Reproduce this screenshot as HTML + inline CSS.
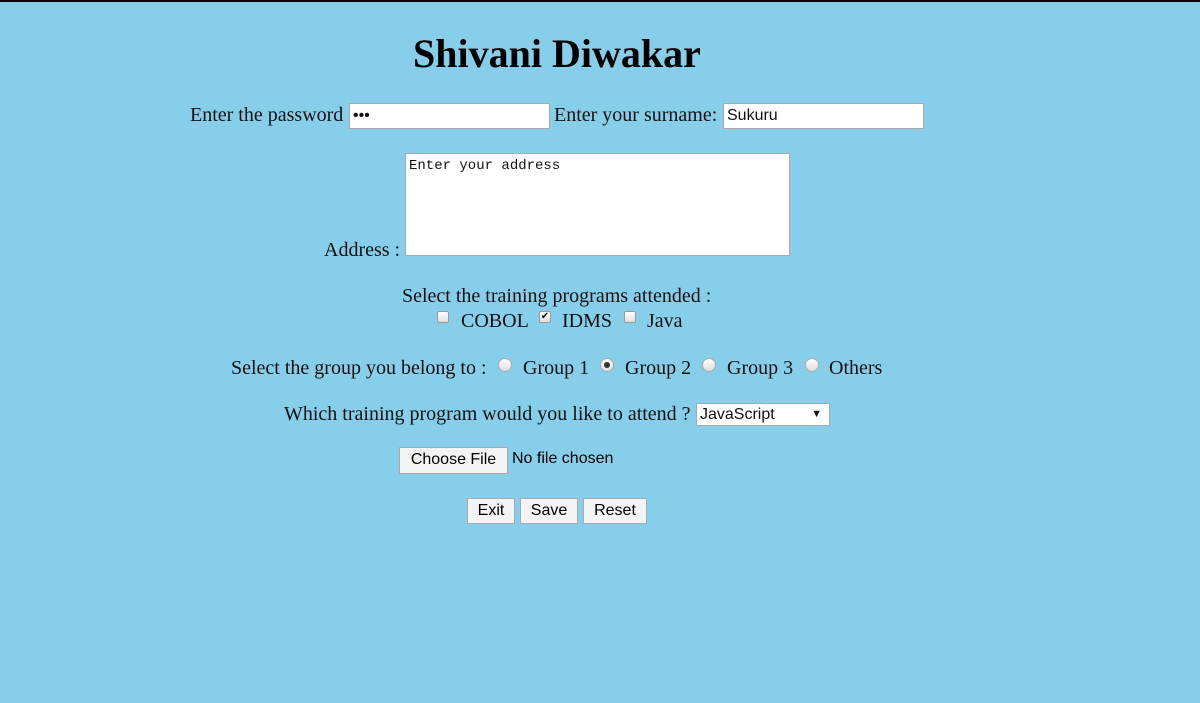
<!DOCTYPE html>
<html><head><style>
body{margin:0;width:1200px;height:703px;background:#87ceeb;position:relative;overflow:hidden;font-family:"Liberation Serif",serif;font-size:20px;color:#111}
.a{position:absolute;white-space:nowrap}
.inp{position:absolute;background:#fff;border:1px solid #a9a9a9;box-sizing:border-box;font-family:"Liberation Sans",sans-serif;font-size:16px;padding-left:3px;line-height:24px}
.btn{position:absolute;background:#f3f3f3;border:1px solid #aaa;box-sizing:border-box;font-family:"Liberation Sans",sans-serif;font-size:16px;text-align:center;line-height:24px;color:#000}
.cb{position:absolute;width:12px;height:12px;border:1px solid #999;border-radius:2px;background:linear-gradient(#fff,#ddd);box-sizing:border-box;font-size:10px;line-height:10px;text-align:center}
.rd{position:absolute;width:14px;height:14px;border:1px solid #aaa;border-radius:50%;background:linear-gradient(#fff,#ddd);box-sizing:border-box}
</style></head><body>
<div style="position:absolute;left:0;top:0;width:1200px;height:2px;background:#000"></div>
<div class="a" style="left:413px;top:30px;font-size:40px;font-weight:bold;color:#000">Shivani Diwakar</div>
<div class="a" style="left:190px;top:104px">Enter the password</div>
<div class="inp" style="left:349px;top:103px;width:201px;height:26px">•••</div>
<div class="a" style="left:554px;top:104px">Enter your surname:</div>
<div class="inp" style="left:723px;top:103px;width:201px;height:26px">Sukuru</div>
<div class="a" style="left:324px;top:239px">Address :</div>
<div class="inp" style="left:405px;top:153px;width:385px;height:103px;font-family:'Liberation Mono',monospace;font-size:14px;line-height:18px;padding:3px 3px">Enter your address</div>
<div class="a" style="left:402px;top:285px">Select the training programs attended :</div>
<div class="cb" style="left:437px;top:311px"></div>
<div class="a" style="left:461px;top:310px">COBOL</div>
<div class="cb" style="left:539px;top:311px">✔</div>
<div class="a" style="left:562px;top:310px">IDMS</div>
<div class="cb" style="left:624px;top:311px"></div>
<div class="a" style="left:647px;top:310px">Java</div>
<div class="a" style="left:231px;top:357px">Select the group you belong to :</div>
<div class="rd" style="left:498px;top:358px"></div>
<div class="a" style="left:523px;top:357px">Group 1</div>
<div class="rd" style="left:600px;top:358px"><div style="width:6px;height:6px;background:#333;border-radius:50%;margin:3px"></div></div>
<div class="a" style="left:625px;top:357px">Group 2</div>
<div class="rd" style="left:702px;top:358px"></div>
<div class="a" style="left:727px;top:357px">Group 3</div>
<div class="rd" style="left:805px;top:358px"></div>
<div class="a" style="left:829px;top:357px">Others</div>
<div class="a" style="left:284px;top:403px">Which training program would you like to attend ?</div>
<div class="inp" style="left:696px;top:403px;width:134px;height:23px;line-height:21px">JavaScript<span style="position:absolute;right:7px;font-size:11px">▼</span></div>
<div class="btn" style="left:399px;top:447px;width:109px;height:27px">Choose File</div>
<div class="a" style="left:512px;top:450px;font-family:'Liberation Sans',sans-serif;font-size:16px;color:#000">No file chosen</div>
<div class="btn" style="left:467px;top:498px;width:48px;height:26px">Exit</div>
<div class="btn" style="left:520px;top:498px;width:58px;height:26px">Save</div>
<div class="btn" style="left:583px;top:498px;width:64px;height:26px">Reset</div>
</body></html>
